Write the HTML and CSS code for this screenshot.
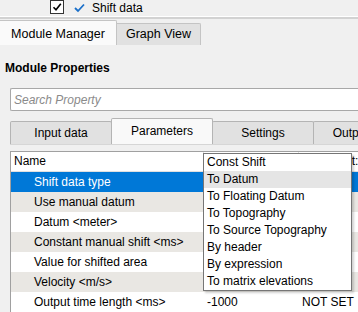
FILE: index.html
```html
<!DOCTYPE html>
<html lang="en">
<head>
  <meta charset="UTF-8" />
  <title>Module Properties</title>
  <link rel="stylesheet" href="styles.css">
</head>
<body>
  <div class="topbar">
    <span class="checkbox">
      <svg width="12" height="12" viewBox="0 0 12 12"><path d="M2.5 6.2 L5 8.8 L9.8 2.8" fill="none" stroke="#000" stroke-width="1.6"/></svg>
    </span>
    <svg class="tick" width="11" height="10" viewBox="0 0 11 10"><path d="M1 5 L4 8 L10 1.5" fill="none" stroke="#1a6fc9" stroke-width="1.8"/></svg>
    <span>Shift data</span>
  </div>
  <div class="divider"></div>

  <div class="main-tabs">
    <div class="tab active">Module Manager</div>
    <div class="tab">Graph View</div>
  </div>

  <div class="panel">
    <div class="title">Module Properties</div>
    <div class="search">Search Property</div>

    <div class="sub-tabs">
      <div class="stab">Input data</div>
      <div class="stab active">Parameters</div>
      <div class="stab">Settings</div>
      <div class="stab">Output data</div>
    </div>

    <div class="grid">
      <div class="row head">
        <div class="c1">Name</div>
        <div class="c2">Value</div>
        <div class="c3">Comment:</div>
      </div>
      <div class="row sel"><div class="c1 in">Shift data type</div><div class="c2">To Datum</div><div class="c3"></div></div>
      <div class="row alt"><div class="c1 in">Use manual datum</div><div class="c2"></div><div class="c3"></div></div>
      <div class="row"><div class="c1 in">Datum &lt;meter&gt;</div><div class="c2"></div><div class="c3"></div></div>
      <div class="row alt"><div class="c1 in">Constant manual shift &lt;ms&gt;</div><div class="c2"></div><div class="c3"></div></div>
      <div class="row"><div class="c1 in">Value for shifted area</div><div class="c2"></div><div class="c3"></div></div>
      <div class="row alt"><div class="c1 in">Velocity &lt;m/s&gt;</div><div class="c2"></div><div class="c3"></div></div>
      <div class="row"><div class="c1 in">Output time length &lt;ms&gt;</div><div class="c2">-1000</div><div class="c3">NOT SET</div></div>
    </div>
  </div>

  <ul class="dropdown">
    <li>Const Shift</li>
    <li class="hover">To Datum</li>
    <li>To Floating Datum</li>
    <li>To Topography</li>
    <li>To Source Topography</li>
    <li>By header</li>
    <li>By expression</li>
    <li>To matrix elevations</li>
  </ul>
</body>
</html>
```

FILE: styles.css
```css
html, body {
  margin: 0;
  width: 358px;
  height: 312px;
  overflow: hidden;
}
body {
  position: relative;
  background-color: #f0f0f0;
  font-family: "Liberation Sans", Arial, sans-serif;
  font-size: 12px;
  color: #000;
}
.topbar {
  height: 16px;
  display: flex;
  align-items: center;
  padding-left: 50px;
  font-size: 12px;
}
.checkbox {
  width: 12px;
  height: 12px;
  border: 1px solid #333;
  background: #fff;
  display: flex;
  margin-top: -2px;
}
.tick {
  margin-left: 10px;
  margin-right: 7px;
}
.divider {
  height: 1px;
  background: #fff;
  border-bottom: 2px solid #d2d2d2;
}
.main-tabs {
  display: flex;
  align-items: flex-end;
  height: 25px;
  margin-top: 1px;
}
.tab {
  flex: none;
  width: 84px;
  height: 22px;
  line-height: 21px;
  text-align: center;
  white-space: nowrap;
  background: #e1e1e1;
  border: 1px solid #c4c4c4;
  border-bottom: none;
  border-left: none;
  border-radius: 0 2px 0 0;
  box-sizing: border-box;
  font-size: 12.5px;
}
.tab.active {
  width: 117px;
  height: 25px;
  line-height: 27px;
  background: #fafafa;
}
.panel {
  padding-top: 14px;
}
.title {
  font-weight: bold;
  font-size: 12px;
  padding-left: 5px;
  height: 18px;
  line-height: 18px;
}
.search {
  margin: 11px 0 0 10px;
  width: 360px;
  height: 23px;
  line-height: 22px;
  border: 1px solid #a8a8a8;
  border-right: none;
  border-radius: 2px 0 0 2px;
  background: #fff;
  color: #8a8a8a;
  font-style: italic;
  padding-left: 3px;
  box-sizing: border-box;
}
.sub-tabs {
  display: flex;
  align-items: flex-end;
  margin: 7px 0 0 10px;
  height: 26px;
  border-bottom: 1px solid #d6d6d6;
}
.stab {
  width: 102px;
  flex: none;
  height: 23px;
  line-height: 22px;
  text-align: center;
  white-space: nowrap;
  background: #e1e1e1;
  border: 1px solid #b4b4b4;
  border-bottom: none;
  border-radius: 2px 2px 0 0;
  box-sizing: border-box;
  margin-right: -1px;
}
.stab.active {
  height: 26px;
  line-height: 24px;
  background: #f9f9f9;
}
.grid {
  margin: 6px 0 0 10px;
  border-left: 1px solid #a0a0a0;
  border-top: 1px solid #a0a0a0;
}
.row {
  display: flex;
  height: 20px;
  line-height: 20px;
  background: #fff;
}
.row.alt {
  background: #e9e7e3;
}
.row.sel {
  background: #0078d7;
  color: #fff;
}
.row.head {
  background: #fff;
  border-bottom: 1px solid #e0e0e0;
  height: 19px;
  line-height: 19px;
}
.c1 {
  flex: none;
  width: 189px;
  padding-left: 3px;
  white-space: nowrap;
}
.c1.in {
  width: 169px;
  padding-left: 23px;
}
.c2 {
  flex: none;
  width: 91px;
  padding-left: 4px;
}
.c3 {
  padding-left: 4px;
  white-space: nowrap;
}
.head .c2, .head .c3 {
  border-left: 1px solid #e0e0e0;
}
.head .c2 {
  width: 90px;
}
.dropdown {
  position: absolute;
  left: 203px;
  top: 153px;
  width: 149px;
  margin: 0;
  padding: 0;
  list-style: none;
  background: #fff;
  border: 1px solid #767676;
  box-sizing: border-box;
  box-shadow: 2px 2px 2px rgba(0, 0, 0, 0.18);
}
.dropdown li {
  height: 17px;
  line-height: 17px;
  padding-left: 3px;
  white-space: nowrap;
}
.dropdown li.hover {
  background: #e5e5e5;
}
```
